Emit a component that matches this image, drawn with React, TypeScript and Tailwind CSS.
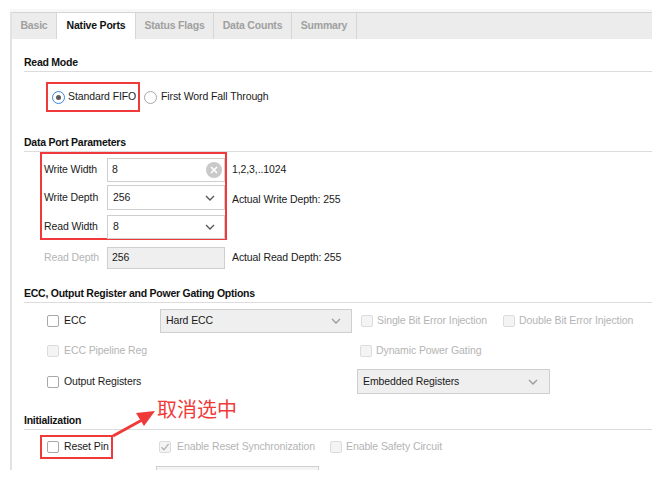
import React from "react";

const Chevron = ({ color = "#666" }: { color?: string }) => (
  <svg width="10" height="6" viewBox="0 0 10 6">
    <path d="M1 1 L5 5 L9 1" fill="none" stroke={color} strokeWidth="1.3" />
  </svg>
);

const Check = ({ disabled = false, checked = false }: { disabled?: boolean; checked?: boolean }) => (
  <div
    className={`shrink-0 w-[12px] h-[12px] rounded-[2px] border flex items-center justify-center ${
      disabled ? "border-[#dcdcdc] bg-[#f4f4f4]" : "border-[#a8a8a8] bg-white"
    }`}
  >
    {checked && (
      <svg width="10" height="10" viewBox="0 0 10 10">
        <path d="M1.5 5.2 L4 7.8 L8.6 1.8" fill="none" stroke="#b0b0b0" strokeWidth="1.3" />
      </svg>
    )}
  </div>
);

const Header = ({ title, pt }: { title: string; pt: string }) => (
  <div className={`${pt} pb-[2px] border-b border-[#dcdcdc] ml-[12px]`}>
    <div className="text-[10.5px] leading-[14px] font-bold tracking-[-0.25px] text-[#111] whitespace-nowrap">
      {title}
    </div>
  </div>
);

export default function App() {
  const tabs = ["Basic", "Native Ports", "Status Flags", "Data Counts", "Summary"];
  const widths = ["w-[45px]", "w-[79px]", "w-[78px]", "w-[78px]", "w-[65px]"];
  return (
    <div
      className="w-[661px] h-[486px] bg-white relative overflow-hidden text-[#1a1a1a] whitespace-nowrap"
      style={{ fontFamily: '"Liberation Sans", Arial, sans-serif' }}
    >
      <div className="h-[9px]" />
      <div className="ml-[10px] w-[642px] h-[3px] bg-[#f7f7f7]" />
      <div className="ml-[10px] w-[642px] h-[458px] border-l-2 border-[#e2e2e2] overflow-hidden">
        {/* tab bar */}
        <div className="h-[27px] bg-[#ececec] border-t border-[#d4d4d4] flex items-stretch">
          {tabs.map((t, i) => (
            <div
              key={t}
              className={`${widths[i]} flex items-center justify-center text-[10.5px] tracking-[-0.2px] font-bold border-r border-[#d6d6d6] ${
                i === 1 ? "bg-white text-[#111]" : "text-[#a0a0a0]"
              }`}
            >
              {t}
            </div>
          ))}
        </div>

        <div className="bg-white flex flex-col text-[10.5px] tracking-[-0.1px]">
          <Header title="Read Mode" pt="pt-[16px]" />
          {/* radio row */}
          <div className="mt-[10px] ml-[34px] flex items-center h-[30px]">
            <div className="h-[30px] w-[94px] border-2 border-[#f03a3a] flex items-center pl-[4px]">
              <div className="shrink-0 w-[13px] h-[13px] rounded-full border border-[#3d86d8] bg-white flex items-center justify-center">
                <div className="w-[5px] h-[5px] rounded-full bg-[#5a5a5a]" />
              </div>
              <span className="ml-[3px]">Standard FIFO</span>
            </div>
            <div className="shrink-0 ml-[4px] w-[13px] h-[13px] rounded-full border border-[#a8a8a8] bg-white" />
            <span className="ml-[4px]">First Word Fall Through</span>
          </div>

          <Header title="Data Port Parameters" pt="pt-[23px]" />
          {/* red box */}
          <div className="flex">
            <div className="ml-[28px] w-[187px] h-[88px] border-2 border-[#f03a3a] flex flex-col pt-[4px] pl-[2px]">
              <div className="flex items-center h-[24px]">
                <div className="w-[63px]">Write Width</div>
                <div className="w-[118px] h-[24px] border border-[#cfcfcf] bg-white flex items-center pl-[4px] pr-[2px] justify-between">
                  <span>8</span>
                  <div className="w-[16px] h-[16px] rounded-full bg-[#c9c9c9] flex items-center justify-center">
                    <svg width="8" height="8" viewBox="0 0 8 8">
                      <path d="M1 1 L7 7 M7 1 L1 7" stroke="white" strokeWidth="1.6" />
                    </svg>
                  </div>
                </div>
              </div>
              <div className="flex items-center h-[25px] mt-[3px]">
                <div className="w-[63px]">Write Depth</div>
                <div className="w-[118px] h-[25px] border border-[#cfcfcf] bg-white flex items-center pl-[5px] pr-[9px] justify-between">
                  <span>256</span>
                  <Chevron color="#555" />
                </div>
              </div>
              <div className="flex items-center h-[24px] mt-[5px]">
                <div className="w-[63px]">Read Width</div>
                <div className="w-[118px] h-[24px] border border-[#cfcfcf] bg-white flex items-center pl-[5px] pr-[9px] justify-between">
                  <span>8</span>
                  <Chevron color="#555" />
                </div>
              </div>
            </div>
            <div className="flex flex-col ml-[5px]">
              <div className="h-[31px] flex items-center pt-[4px]">1,2,3,..1024</div>
              <div className="h-[27px] flex items-center pt-[6px]">Actual Write Depth: 255</div>
            </div>
          </div>
          {/* read depth */}
          <div className="flex items-center mt-[7px] ml-[32px] h-[22px]">
            <div className="w-[63px] text-[#b4b4b4]">Read Depth</div>
            <div className="w-[118px] h-[22px] border border-[#cfcfcf] bg-[#efefef] flex items-center pl-[4px]">256</div>
            <div className="ml-[7px]">Actual Read Depth: 255</div>
          </div>

          <Header title="ECC, Output Register and Power Gating Options" pt="pt-[17px]" />
          {/* ECC row */}
          <div className="flex items-center h-[24px] mt-[6px] ml-[35px]">
            <Check />
            <span className="ml-[5px] w-[96px]">ECC</span>
            <div className="w-[192px] h-[24px] border border-[#cfcfcf] bg-[#efefef] flex items-center justify-between pl-[5px] pr-[10px]">
              <span>Hard ECC</span>
              <Chevron color="#9a9a9a" />
            </div>
            <div className="ml-[9px]">
              <Check disabled />
            </div>
            <span className="ml-[4px] text-[#b4b4b4] w-[126px]">Single Bit Error Injection</span>
            <Check disabled />
            <span className="ml-[4px] text-[#b4b4b4]">Double Bit Error Injection</span>
          </div>
          <div className="flex items-center h-[20px] mt-[8px] ml-[35px]">
            <Check disabled />
            <span className="ml-[5px] w-[296px] text-[#b4b4b4]">ECC Pipeline Reg</span>
            <Check disabled />
            <span className="ml-[4px] text-[#b4b4b4]">Dynamic Power Gating</span>
          </div>
          <div className="flex items-center h-[25px] mt-[8px] ml-[35px]">
            <Check />
            <span className="ml-[5px] w-[293px]">Output Registers</span>
            <div className="w-[193px] h-[25px] border border-[#cfcfcf] bg-[#efefef] flex items-center justify-between pl-[5px] pr-[11px]">
              <span>Embedded Registers</span>
              <Chevron color="#9a9a9a" />
            </div>
          </div>

          <Header title="Initialization" pt="pt-[19px]" />
          <div className="flex items-center h-[24px] mt-[5px] ml-[28px]">
            <div className="h-[24px] w-[73px] border-2 border-[#f03a3a] flex items-center pl-[5px]">
              <Check />
              <span className="ml-[5px]">Reset Pin</span>
            </div>
            <div className="ml-[46px]">
              <Check disabled checked />
            </div>
            <span className="ml-[6px] w-[153px] text-[#b4b4b4]">Enable Reset Synchronization</span>
            <Check disabled />
            <span className="ml-[4px] text-[#b4b4b4]">Enable Safety Circuit</span>
          </div>
          <div className="mt-[7px] ml-[144px] w-[163px] h-[10px] border border-[#cfcfcf] bg-[#f4f4f4]" />
        </div>
      </div>

      {/* annotation */}
      <svg className="absolute left-0 top-0" width="661" height="486" viewBox="0 0 661 486">
        <path d="M113 436 L142 420" stroke="#f03a3a" strokeWidth="3" />
        <path d="M155 411 L136 413 L144 426 Z" fill="#f03a3a" />
      </svg>
      <div
        className="absolute left-[157px] top-[397px] text-[20px] leading-[24px] text-[#f03a3a]"
        style={{ fontFamily: '"Noto Sans CJK SC", sans-serif' }}
      >
        取消选中
      </div>
    </div>
  );
}
